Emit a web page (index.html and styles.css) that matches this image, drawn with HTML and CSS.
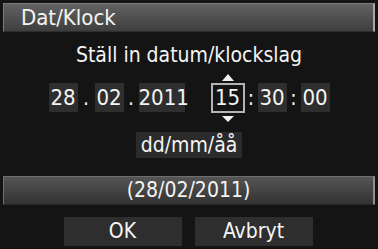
FILE: index.html
```html
<!DOCTYPE html>
<html lang="sv">
<head>
  <meta charset="UTF-8" />
  <title>Dat/Klock</title>
  <link rel="stylesheet" href="styles.css">
</head>
<body>
  <div class="screen">
    <div class="titlebar">Dat/Klock</div>

    <div class="heading">Ställ in datum/klockslag</div>

    <div class="datetime">
      <span class="field">28</span>
      <span class="sep dot">.</span>
      <span class="field">02</span>
      <span class="sep dot">.</span>
      <span class="field year">2011</span>
      <span class="field active">15</span>
      <span class="sep colon">:</span>
      <span class="field">30</span>
      <span class="sep colon">:</span>
      <span class="field">00</span>
    </div>

    <div class="format">dd/mm/åå</div>

    <div class="datebar">(28/02/2011)</div>

    <div class="buttons">
      <div class="btn">OK</div>
      <div class="btn">Avbryt</div>
    </div>
  </div>
</body>
</html>
```

FILE: styles.css
```css
html, body {
  margin: 0;
  padding: 0;
  background: #141414;
}
.screen {
  width: 378px;
  height: 249px;
  display: flex;
  flex-direction: column;
  align-items: center;
  color: #f4f4f4;
  font-family: "DejaVu Sans Condensed", "DejaVu Sans", sans-serif;
  font-size: 21px;
}
.titlebar {
  align-self: stretch;
  margin: 3px 3px 0 3px;
  height: 27px;
  line-height: 27px;
  padding-left: 17px;
  font-size: 22px;
  background: linear-gradient(#626262, #3e3e3e);
  border: 1px solid #7a7a7a;
  border-right: 2px solid #a8a8a8;
  border-bottom-color: #2e2e2e;
}
.heading {
  margin-top: 10px;
  height: 26px;
  line-height: 26px;
}
.datetime {
  margin-top: 15px;
  display: flex;
  align-items: center;
  height: 29px;
}
.field {
  display: block;
  width: 29px;
  height: 29px;
  line-height: 29px;
  text-align: center;
  background: #2e2e2e;
  font-size: 22px;
}
.field.year {
  width: 46px;
  margin-right: 26px;
}
.field.active {
  position: relative;
  width: 30px;
  height: 26px;
  line-height: 26px;
  background: #151515;
  border: 2px solid #b4b4b4;
}
.field.active::before,
.field.active::after {
  content: "";
  position: absolute;
  left: 9px;
  border-left: 6px solid transparent;
  border-right: 6px solid transparent;
}
.field.active::before {
  top: -11px;
  border-bottom: 7px solid #f0f0f0;
}
.field.active::after {
  bottom: -11px;
  border-top: 6px solid #f0f0f0;
}
.sep {
  display: block;
  text-align: center;
}
.dot {
  width: 15px;
}
.dot:nth-child(2) {
  width: 17px;
}
.colon {
  width: 13px;
}
.colon + .field + .colon {
  width: 14px;
}
.format {
  margin-top: 20px;
  width: 106px;
  height: 26px;
  line-height: 26px;
  text-align: center;
  background: #2b2b2b;
}
.datebar {
  align-self: stretch;
  margin: 18px 3px 0 3px;
  height: 27px;
  line-height: 27px;
  text-align: center;
  background: linear-gradient(#555555, #323232);
  border: 1px solid #6e6e6e;
  border-right: 2px solid #8e8e8e;
  border-bottom-color: #262626;
}
.buttons {
  margin-top: 12px;
  display: flex;
  gap: 13px;
  padding-right: 2px;
}
.btn {
  width: 118px;
  height: 29px;
  line-height: 29px;
  text-align: center;
  background: #2e2e2e;
}
```
